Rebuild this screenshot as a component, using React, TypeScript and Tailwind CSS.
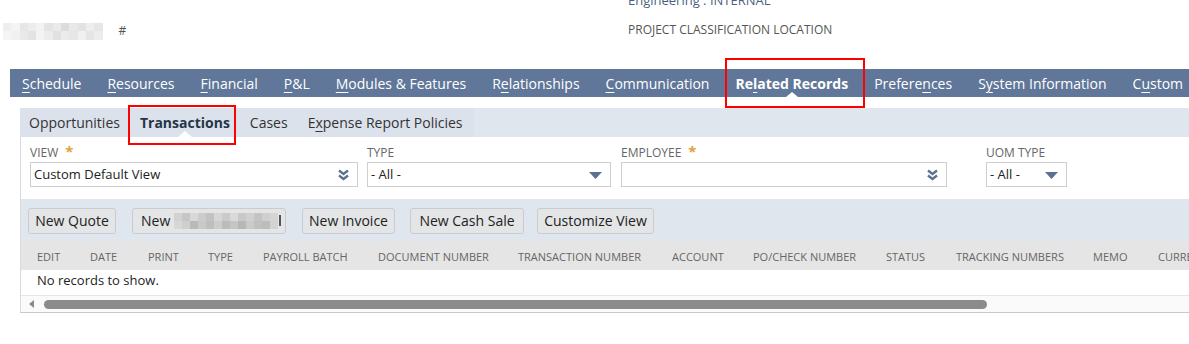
import React from 'react'

type Tab = { label: string; key: number; active?: boolean }

const navTabs: Tab[] = [
  { label: 'Schedule', key: 0 },
  { label: 'Resources', key: 0 },
  { label: 'Financial', key: 0 },
  { label: 'P&L', key: 0 },
  { label: 'Modules & Features', key: 0 },
  { label: 'Relationships', key: 1 },
  { label: 'Communication', key: 0 },
  { label: 'Related Records', key: 2, active: true },
  { label: 'Preferences', key: 7 },
  { label: 'System Information', key: 1 },
  { label: 'Custom', key: 1 },
]

const subTabs: Tab[] = [
  { label: 'Opportunities', key: -1 },
  { label: 'Transactions', key: -1, active: true },
  { label: 'Cases', key: -1 },
  { label: 'Expense Report Policies', key: 1 },
]

const columns: [string, number][] = [
  ['EDIT', 53],
  ['DATE', 58],
  ['PRINT', 60],
  ['TYPE', 55],
  ['PAYROLL BATCH', 115],
  ['DOCUMENT NUMBER', 140],
  ['TRANSACTION NUMBER', 154],
  ['ACCOUNT', 81],
  ['PO/CHECK NUMBER', 133],
  ['STATUS', 70],
  ['TRACKING NUMBERS', 137],
  ['MEMO', 65],
  ['CURRENCY', 90],
]

function Keyed({ label, at }: { label: string; at: number }) {
  if (at < 0) return <>{label}</>
  return (
    <>
      {label.slice(0, at)}
      <span className="underline decoration-1 underline-offset-[3px]">{label[at]}</span>
      {label.slice(at + 1)}
    </>
  )
}

// pixelated blur stand-in
function Mosaic({ cols, shades, cell = 8 }: { cols: number; shades: string[][]; cell?: number }) {
  return (
    <div className="flex flex-col">
      {shades.map((row, r) => (
        <div key={r} className="flex">
          {Array.from({ length: cols }).map((_, c) => (
            <div
              key={c}
              style={{ width: cell, height: cell, background: row[c % row.length] }}
            />
          ))}
        </div>
      ))}
    </div>
  )
}

function DoubleChevron() {
  return (
    <svg width="11" height="12" viewBox="0 0 11 12">
      <path d="M1 1.5 L5.5 5 L10 1.5" fill="none" stroke="#5c7091" strokeWidth="2.4" />
      <path d="M1 6.5 L5.5 10 L10 6.5" fill="none" stroke="#5c7091" strokeWidth="2.4" />
    </svg>
  )
}

function Triangle() {
  return (
    <svg width="13" height="7" viewBox="0 0 13 7">
      <path d="M0 0 H13 L6.5 7 Z" fill="#5c7091" />
    </svg>
  )
}

function Field({
  label,
  required,
  width,
  value,
  icon,
}: {
  label: string
  required?: boolean
  width: string
  value: string
  icon: 'double' | 'tri'
}) {
  return (
    <div className="flex flex-col">
      <div className="h-[25px] flex items-center text-[12px] text-[#666] leading-none pt-[7px]">
        {label}
        {required && <span className="ml-[7px] text-[15px] text-[#e3a13a] font-bold -mt-[3px]">*</span>}
      </div>
      <div
        className={`${width} h-[25px] border border-[#cfcfcf] bg-white flex items-center justify-between pl-[3px] pr-[8px] pt-[1px] text-[13px] text-[#222]`}
      >
        <span>{value}</span>
        {icon === 'double' ? <DoubleChevron /> : <Triangle />}
      </div>
    </div>
  )
}

function Button({ children, className }: { children: React.ReactNode; className: string }) {
  return (
    <div
      className={`${className} h-[26px] flex items-center justify-center rounded-[3px] border border-[#c9cbcf] bg-[#e4e5e7] text-[14px] text-[#222]`}
    >
      {children}
    </div>
  )
}

export default function App() {
  return (
    <div className="w-[1189px] h-[344px] overflow-hidden bg-white font-['Open_Sans',sans-serif]">
      {/* Header */}
      <div className="h-[69px] flex">
        <div className="w-[628px] pt-[23px] pl-[3px] flex">
          <Mosaic
            cols={12}
            cell={8.3}
            shades={[
              ['#eeeeee', '#f4f4f4', '#e6e6e6', '#ececec', '#f2f2f2', '#e4e4e4', '#eaeaea', '#dcdcdc', '#e8e8e8', '#e2e2e2', '#ededed', '#e6e6e6'],
              ['#f5f5f5', '#f0f0f0', '#e9e9e9', '#e3e3e3', '#f3f3f3', '#ececec', '#e1e1e1', '#ebebeb', '#e6e6e6', '#f0f0f0', '#e5e5e5', '#ededed'],
            ]}
          />
          <span className="ml-[16px] mt-[-1px] text-[12px] text-[#555]">#</span>
        </div>
        <div className="flex flex-col">
          <div className="-mt-[9px] h-[18px] text-[13px] text-[#4a5f80] leading-[18px]">Engineering : INTERNAL</div>
          <div className="mt-[13px] text-[12px] text-[#555] leading-[16px]">PROJECT CLASSIFICATION LOCATION</div>
        </div>
      </div>

      {/* Main tabs */}
      <div className="ml-[10px] h-[28px] bg-[#607799] flex items-center pl-[12px] gap-[26px] text-[14px] text-white whitespace-nowrap">
        {navTabs.map(t => (
          <div key={t.label} className={`relative h-full flex items-center ${t.active ? 'font-bold' : ''}`}>
            <Keyed label={t.label} at={t.key} />
            {t.active && (
              <>
                <div className="absolute bottom-0 left-1/2 -ml-[6px] w-0 h-0 border-l-[6px] border-r-[6px] border-b-[5px] border-l-transparent border-r-transparent border-b-white" />
                <div className="absolute -left-[10px] -right-[17px] -top-[11px] -bottom-[11px] border-2 border-[#ff0000]" />
              </>
            )}
          </div>
        ))}
      </div>

      {/* Panel */}
      <div className="ml-[20px] mt-[11px]">
        {/* Sub tabs */}
        <div className="h-[29px] flex bg-[#e0e6ee]">
          <div className="flex items-center bg-[#dce2eb] pl-[9px] pr-[12px] gap-[20px] text-[14px] text-[#333] whitespace-nowrap">
            {subTabs.map(t => (
              <div key={t.label} className={`relative h-full flex items-center ${t.active ? 'font-bold text-[#263548]' : ''}`}>
                <Keyed label={t.label} at={t.key} />
                {t.active && (
                  <>
                    <div className="absolute bottom-0 left-1/2 -ml-[7px] w-0 h-0 border-l-[7px] border-r-[7px] border-b-[6px] border-l-transparent border-r-transparent border-b-white" />
                    <div className="absolute -left-[12px] -right-[6px] -top-[3px] -bottom-[8px] border-2 border-[#ff0000]" />
                  </>
                )}
              </div>
            ))}
          </div>
        </div>

        <div className="border-l border-[#dadada] border-b border-b-[#c8c8c8]">
          {/* Filters */}
          <div className="h-[62px] flex pl-[9px]">
            <Field label="VIEW" required width="w-[328px]" value="Custom Default View" icon="double" />
            <div className="ml-[9px]">
              <Field label="TYPE" width="w-[244px]" value="- All -" icon="tri" />
            </div>
            <div className="ml-[10px]">
              <Field label="EMPLOYEE" required width="w-[326px]" value="" icon="double" />
            </div>
            <div className="ml-[39px]">
              <Field label="UOM TYPE" width="w-[81px]" value="- All -" icon="tri" />
            </div>
          </div>

          {/* Buttons */}
          <div className="h-[42px] bg-[#e0e6ee] flex items-center pl-[7px] pt-[1px]">
            <Button className="w-[88px]">New Quote</Button>
            <Button className="w-[154px] ml-[16px]">
              <div className="flex items-center w-full pl-[8px]">
                <span>New</span>
                <div className="ml-[4px]">
                  <Mosaic
                    cols={13}
                    cell={8}
                    shades={[
                      ['#d2d2d2', '#c6c6c6', '#d8d8d8', '#cccccc', '#c2c2c2', '#d6d6d6', '#cbcbcb', '#d9d9d9', '#c8c8c8', '#d0d0d0', '#c4c4c4', '#cfcfcf', '#d5d5d5'],
                      ['#d7d7d7', '#cfcfcf', '#b9b9b9', '#c9c9c9', '#bfbfbf', '#cdcdcd', '#bcbcbc', '#c5c5c5', '#b7b7b7', '#cacaca', '#c0c0c0', '#bdbdbd', '#d3d3d3'],
                    ]}
                  />
                </div>
                <div className="w-[2px] h-[11px] bg-[#555] ml-[1px]" />
              </div>
            </Button>
            <Button className="w-[93px] ml-[16px]">New Invoice</Button>
            <Button className="w-[114px] ml-[15px]">New Cash Sale</Button>
            <Button className="w-[117px] ml-[13px]">Customize View</Button>
          </div>

          {/* Table */}
          <div className="h-[29px] bg-[#e5e5e5] flex items-center pl-[16px] pt-[3px] text-[11px] text-[#666] whitespace-nowrap">
            {columns.map(([c, w]) => (
              <div key={c} className="shrink-0" style={{ width: w }}>
                {c}
              </div>
            ))}
          </div>
          <div className="h-[26px] flex items-center pl-[16px] pb-[3px] text-[13px] text-[#222] border-b border-[#e6e6e6]">
            No records to show.
          </div>

          {/* Scrollbar */}
          <div className="h-[16px] bg-[#fafafa] flex items-center pl-[8px]">
            <div className="w-0 h-0 border-t-[4px] border-b-[4px] border-r-[5px] border-t-transparent border-b-transparent border-r-[#8a8a8a]" />
            <div className="ml-[10px] w-[943px] h-[9px] rounded-full bg-[#8b8b8b]" />
          </div>
        </div>
      </div>
    </div>
  )
}
